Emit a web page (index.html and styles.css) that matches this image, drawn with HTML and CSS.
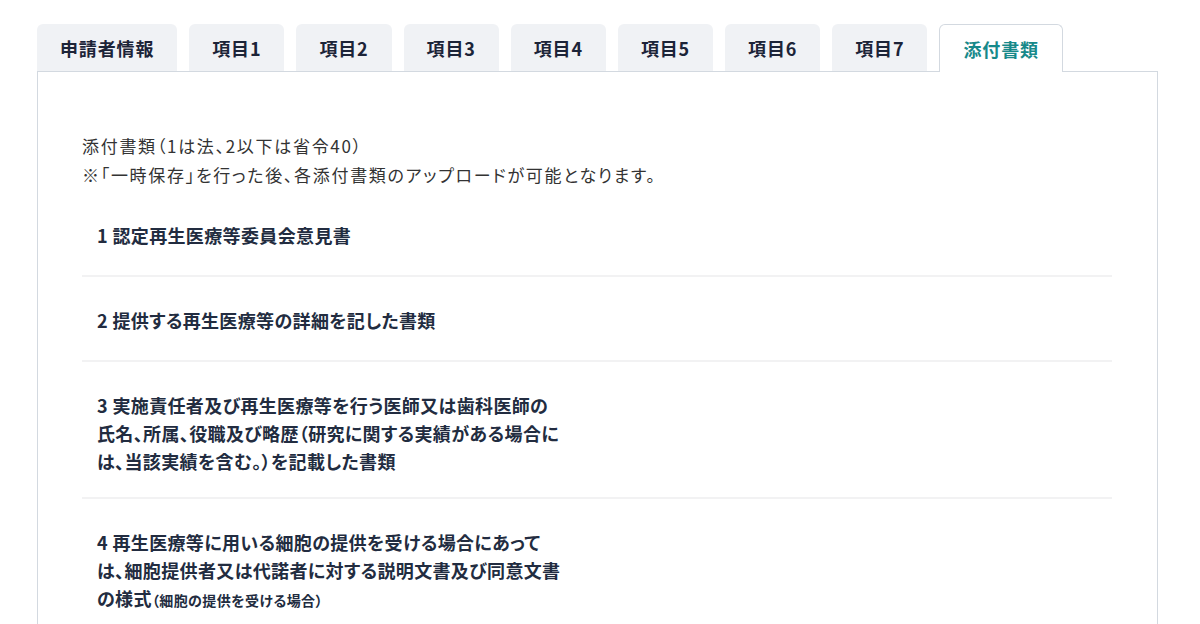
FILE: index.html
```html
<!DOCTYPE html>
<html lang="ja">
<head>
<meta charset="utf-8">
<title>添付書類</title>
<link rel="stylesheet" href="styles.css">
</head>
<body>
<div class="page">
  <nav class="tabs">
    <div class="tab">申請者情報</div>
    <div class="tab">項目1</div>
    <div class="tab">項目2</div>
    <div class="tab">項目3</div>
    <div class="tab">項目4</div>
    <div class="tab">項目5</div>
    <div class="tab">項目6</div>
    <div class="tab">項目7</div>
    <div class="tab tab-active">添付書類</div>
  </nav>
  <section class="panel">
    <p class="intro">添付書類（1は法、2以下は省令40）<br>※「一時保存」を行った後、各添付書類のアップロードが可能となります。</p>
    <ul class="docs">
      <li class="doc"><span class="doc-label">1 認定再生医療等委員会意見書</span></li>
      <li class="doc"><span class="doc-label">2 提供する再生医療等の詳細を記した書類</span></li>
      <li class="doc"><span class="doc-label">3 実施責任者及び再生医療等を行う医師又は歯科医師の<br>氏名、所属、役職及び略歴（研究に関する実績がある場合に<br>は、当該実績を含む。）を記載した書類</span></li>
      <li class="doc"><span class="doc-label">4 再生医療等に用いる細胞の提供を受ける場合にあって<br>は、細胞提供者又は代諾者に対する説明文書及び同意文書<br>の様式<small class="note">（細胞の提供を受ける場合）</small></span></li>
    </ul>
  </section>
</div>
</body>
</html>
```

FILE: styles.css
```css
* { box-sizing: border-box; }
html, body { margin: 0; padding: 0; background: #ffffff; }
body {
  font-family: "Noto Sans CJK JP", "Noto Sans", sans-serif;
  color: #1f2a3d;
  font-feature-settings: "palt";
}
.page {
  padding: 24px 42px 0 37px;
}
.tabs {
  display: flex;
  gap: 12px;
  align-items: flex-end;
}
.tab {
  height: 47px;
  display: flex;
  align-items: center;
  justify-content: center;
  padding: 0 23px;
  background: #f0f2f5;
  border-radius: 6px 6px 0 0;
  font-size: 18px;
  font-weight: 700;
  letter-spacing: 0.047em;
  color: #1c2438;
  font-feature-settings: normal;
}
.tab-active {
  background: #ffffff;
  color: #17898a;
  border: 1px solid #d3d9e0;
  border-bottom: none;
  height: 48px;
  margin-bottom: -1px;
  position: relative;
  z-index: 1;
  padding: 0 23px;
}
.panel {
  border: 1px solid #d3d9e0;
  border-bottom: none;
  height: 560px;
  padding: 59px 45px 0 44px;
}
.intro {
  margin: 0;
  font-size: 17px;
  line-height: 29px;
  letter-spacing: 0.1em;
  color: #333333;
}
.docs {
  list-style: none;
  margin: 3px 0 0;
  padding: 0;
}
.doc {
  padding: 29px 15px 22px;
  border-bottom: 2px solid #f2f2f3;
}
.doc-label {
  display: block;
  min-height: 32px;
  font-size: 18px;
  font-weight: 700;
  line-height: 28px;
  letter-spacing: 0.02em;
  color: #222c40;
  white-space: nowrap;
}
.note {
  font-size: 14px;
  letter-spacing: 0.03em;
}
```
